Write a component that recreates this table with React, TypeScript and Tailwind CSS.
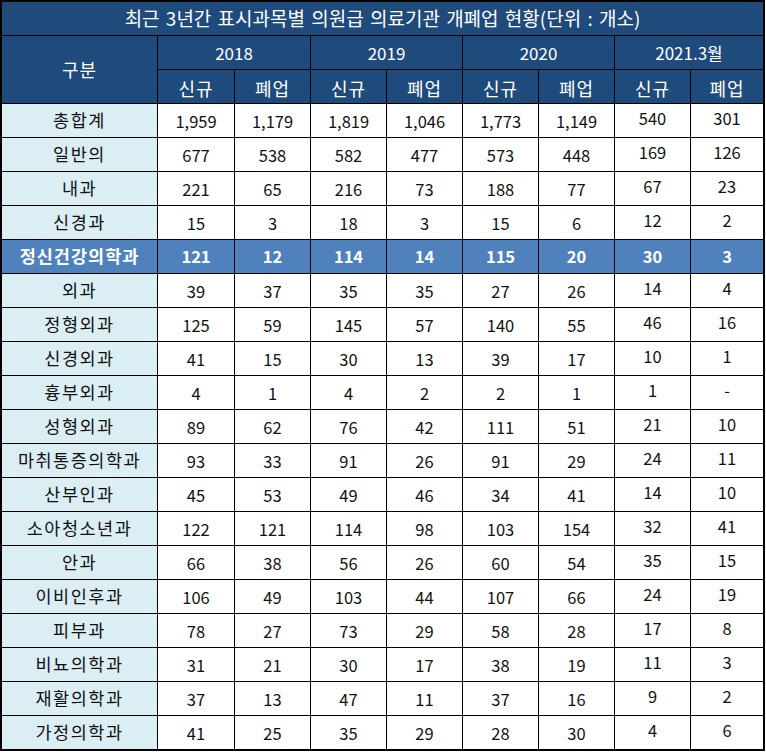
const rows: { name: string; values: string[]; hot?: boolean }[] = [
  { name: "총합계", values: ["1,959", "1,179", "1,819", "1,046", "1,773", "1,149", "540", "301"] },
  { name: "일반의", values: ["677", "538", "582", "477", "573", "448", "169", "126"] },
  { name: "내과", values: ["221", "65", "216", "73", "188", "77", "67", "23"] },
  { name: "신경과", values: ["15", "3", "18", "3", "15", "6", "12", "2"] },
  { name: "정신건강의학과", values: ["121", "12", "114", "14", "115", "20", "30", "3"], hot: true },
  { name: "외과", values: ["39", "37", "35", "35", "27", "26", "14", "4"] },
  { name: "정형외과", values: ["125", "59", "145", "57", "140", "55", "46", "16"] },
  { name: "신경외과", values: ["41", "15", "30", "13", "39", "17", "10", "1"] },
  { name: "흉부외과", values: ["4", "1", "4", "2", "2", "1", "1", "-"] },
  { name: "성형외과", values: ["89", "62", "76", "42", "111", "51", "21", "10"] },
  { name: "마취통증의학과", values: ["93", "33", "91", "26", "91", "29", "24", "11"] },
  { name: "산부인과", values: ["45", "53", "49", "46", "34", "41", "14", "10"] },
  { name: "소아청소년과", values: ["122", "121", "114", "98", "103", "154", "32", "41"] },
  { name: "안과", values: ["66", "38", "56", "26", "60", "54", "35", "15"] },
  { name: "이비인후과", values: ["106", "49", "103", "44", "107", "66", "24", "19"] },
  { name: "피부과", values: ["78", "27", "73", "29", "58", "28", "17", "8"] },
  { name: "비뇨의학과", values: ["31", "21", "30", "17", "38", "19", "11", "3"] },
  { name: "재활의학과", values: ["37", "13", "47", "11", "37", "16", "9", "2"] },
  { name: "가정의학과", values: ["41", "25", "35", "29", "28", "30", "4", "6"] },
];

const years = ["2018", "2019", "2020", "2021.3월"];

export default function App() {
  return (
    <div className="w-[766px] bg-white font-['Noto_Sans_CJK_KR','Noto_Sans',sans-serif]">
      <div className="w-[765px] border-2 border-black bg-black">
        <div className="grid grid-cols-[155px_76px_75px_75px_75px_75px_75px_75px_72px] auto-rows-[33px] gap-px">
          <div className="col-span-9 flex items-center justify-center bg-[#1f4a7c] text-[19px] text-white [word-spacing:2px]">
            최근 3년간 표시과목별 의원급 의료기관 개폐업 현황(단위 : 개소)
          </div>

          <div className="row-span-2 flex items-center justify-center bg-[#1f4a7c] text-[18px] tracking-[1px] text-white">구분</div>
          {years.map((y) => (
            <div key={y} className="col-span-2 flex items-center justify-center bg-[#1f4a7c] text-[17px] text-white">
              {y}
            </div>
          ))}
          {years.map((y) => (
            <div key={y} className="contents">
              <div className="flex items-center justify-center bg-[#1f4a7c] pt-1 text-[18px] tracking-[1px] text-white">신규</div>
              <div className="flex items-center justify-center bg-[#1f4a7c] pt-1 text-[18px] tracking-[1px] text-white">폐업</div>
            </div>
          ))}

          {rows.map((r) => (
            <div key={r.name} className="contents">
              <div
                className={
                  r.hot
                    ? "flex items-center justify-center bg-[#4f81bd] text-[17.5px] font-bold tracking-[1px] text-white"
                    : "flex items-center justify-center bg-[#daeef3] text-[17.5px] tracking-[1.5px] text-[#111]"
                }
              >
                {r.name}
              </div>
              {r.values.map((v, i) => (
                <div
                  key={i}
                  className={
                    r.hot
                      ? "flex items-center justify-center bg-[#4f81bd] text-[16.5px] font-bold text-white"
                      : i >= 6
                        ? "flex items-center justify-center bg-white pb-[5px] text-[16.5px] text-[#111]"
                        : "flex items-center justify-center bg-white pt-px text-[16.5px] text-[#111]"
                  }
                >
                  {v}
                </div>
              ))}
            </div>
          ))}
        </div>
      </div>
    </div>
  );
}
